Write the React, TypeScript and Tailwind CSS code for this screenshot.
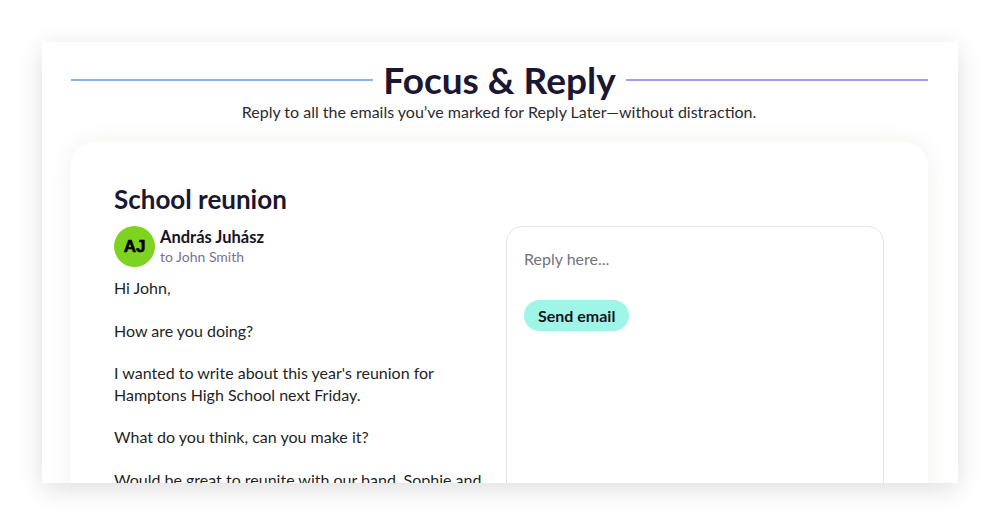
export default function App() {
  const body = [
    "Hi John,",
    "How are you doing?",
    "I wanted to write about this year's reunion for Hamptons High School next Friday.",
    "What do you think, can you make it?",
    "Would be great to reunite with our band, Sophie and Mark will be there too. Let me know!",
  ];

  return (
    <div className="w-[1000px] h-[525px] bg-white pt-[42px] pl-[42px] font-['Lato',sans-serif]">
      <div className="w-[916px] h-[441px] bg-white overflow-hidden shadow-[0_6px_24px_rgba(0,0,0,0.13)] pl-[28px] pr-[30px] pt-[18px]">
        <div className="flex items-center gap-[10px] pl-px">
          <div className="flex-1 h-[2px] bg-[#86b2f4]" />
          <h1 className="text-[37px] leading-[40px] font-bold text-[#1b1631]">Focus &amp; Reply</h1>
          <div className="flex-1 h-[2px] bg-[#a39af2]" />
        </div>
        <p className="text-center text-[16px] leading-[24px] text-[#2b2b33]">
          Reply to all the emails you’ve marked for Reply Later—without distraction.
        </p>

        <div className="mt-[18px] bg-white rounded-[24px] shadow-[0_0_22px_rgba(120,100,80,0.09)] px-[44px] pt-[41px] h-[400px]">
          <h2 className="text-[26px] leading-[32px] font-bold text-[#1b1631]">School reunion</h2>
          <div className="mt-[11px] grid grid-cols-[372px_378px] gap-[20px]">
            <div>
              <div className="flex items-center gap-[5px]">
                <div className="w-[41px] h-[41px] rounded-full bg-[#7ed321] flex items-center justify-center">
                  <span className="font-['Liberation_Sans',sans-serif] font-black text-[17px] text-black [-webkit-text-stroke:0.6px_black]">AJ</span>
                </div>
                <div className="flex flex-col">
                  <span className="text-[16.5px] leading-[20px] font-bold text-[#16141f]">András Juhász</span>
                  <span className="text-[14px] leading-[20px] text-[#77738a]">to John Smith</span>
                </div>
              </div>
              <div className="mt-[10px] flex flex-col gap-[21px] text-[16px] leading-[21.5px] text-[#1f1f24]">
                {body.map((p, i) => (
                  <p key={i}>{p}</p>
                ))}
              </div>
            </div>
            <div className="h-[300px] rounded-[16px] border border-[#e4e4e7] px-[17px] pt-[20px]">
              <textarea
                placeholder="Reply here..."
                className="w-full h-[24px] resize-none outline-none text-[16px] leading-[24px] text-[#222] placeholder:text-[#74747c] font-['Lato',sans-serif] overflow-hidden"
              />
              <button className="mt-[23px] h-[31px] px-[14px] rounded-full bg-[#9ff6e6] text-[16px] font-bold text-[#16141f] font-['Lato',sans-serif]">
                Send email
              </button>
            </div>
          </div>
        </div>
      </div>
    </div>
  );
}
